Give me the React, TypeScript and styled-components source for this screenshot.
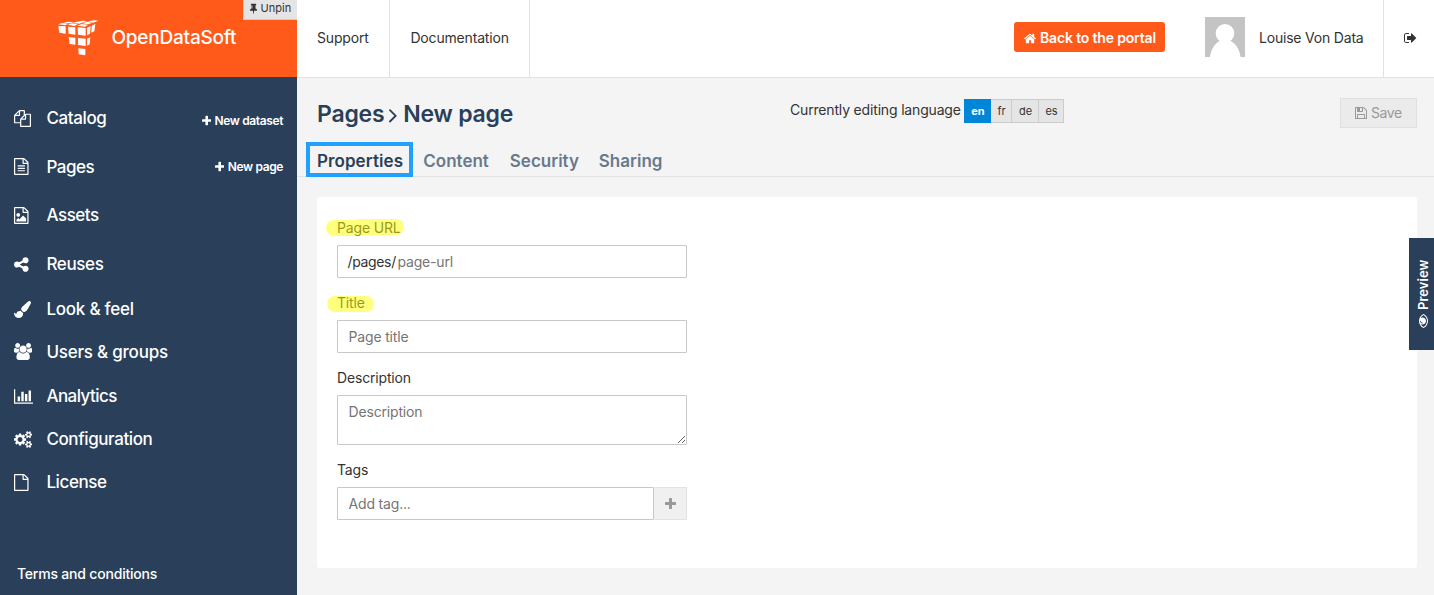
import React from 'react';
import styled, { createGlobalStyle } from 'styled-components';

const color = {
  orange: '#ff5a19',
  navy: '#2a3f5a',
  text: '#333',
  line: '#e3e3e3',
  page: '#f4f4f4',
  field: '#c8c8c8',
  placeholder: '#757575',
};

const GlobalStyle = createGlobalStyle`
  *, *::before, *::after { box-sizing: border-box; }
  body {
    margin: 0;
    overflow: hidden;
    background: ${color.page};
    color: ${color.text};
    font: 400 14px/22px Inter, "Liberation Sans", sans-serif;
    letter-spacing: -0.17px;
  }
  button, input, textarea { font: inherit; letter-spacing: inherit; color: inherit; }
`;

/* ---------- icons ---------- */

const PAGE =
  'M1596 380q28 28 48 76t20 88v1152q0 40-28 68t-68 28h-1344q-40 0-68-28t-28-68v-1600q0-40 28-68t68-28h896q40 0 88 20t76 48zm-444-244v376h376q-10-29-22-41l-313-313q-12-12-41-22zm384 1528v-1024h-416q-40 0-68-28t-28-68v-416h-768v1536h1280z';

const ICONS = {
  files: { x: 0, w: 1792, d: 'M1696 384q40 0 68 28t28 68v1216q0 40-28 68t-68 28h-960q-40 0-68-28t-28-68v-288h-544q-40 0-68-28t-28-68v-672q0-40 20-88t48-76l408-408q28-28 76-48t88-20h416q40 0 68 28t28 68v328q68-40 128-40h416zm-544 213l-299 299h299v-299zm-640-384l-299 299h299v-299zm196 647l316-316v-416h-384v416q0 40-28 68t-68 28h-416v640h512v-256q0-40 20-88t48-76zm956 804v-1152h-384v416q0 40-28 68t-68 28h-416v640h896z' },
  fileText: { x: 128, w: 1536, d: PAGE + 'M512 800q0-14 9-23t23-9h704q14 0 23 9t9 23v64q0 14-9 23t-23 9h-704q-14 0-23-9t-9-23v-64zm736 224q14 0 23 9t9 23v64q0 14-9 23t-23 9h-704q-14 0-23-9t-9-23v-64q0-14 9-23t23-9h704zm0 256q14 0 23 9t9 23v64q0 14-9 23t-23 9h-704q-14 0-23-9t-9-23v-64q0-14 9-23t23-9h704z' },
  fileImage: { x: 128, w: 1536, d: PAGE + 'M1408 1216v320h-1024v-192l192-192 128 128 384-384zm-832-192q-80 0-136-56t-56-136 56-136 136-56 136 56 56 136-56 136-136 56z' },
  file: { x: 128, w: 1536, d: PAGE },
  share: { x: 128, w: 1536, d: 'M1344 1024q133 0 226.5 93.5t93.5 226.5-93.5 226.5-226.5 93.5-226.5-93.5-93.5-226.5q0-12 2-34l-360-180q-92 86-218 86-133 0-226.5-93.5t-93.5-226.5 93.5-226.5 226.5-93.5q126 0 218 86l360-180q-2-22-2-34 0-133 93.5-226.5t226.5-93.5 226.5 93.5 93.5 226.5-93.5 226.5-226.5 93.5q-126 0-218-86l-360 180q2 22 2 34t-2 34l360 180q92-86 218-86z' },
  brush: { x: 0, w: 1792, d: 'M1615 0q70 0 122.5 46.5t52.5 116.5q0 63-45 151-332 629-465 752-97 91-218 91-126 0-216.5-92.5t-90.5-219.5q0-128 92-212l638-579q59-54 130-54zm-909 1034q39 76 106.5 130t150.5 76l1 71q4 213-129.5 347t-348.5 134q-123 0-218-46.5t-152.5-127.5-86.5-183-29-220q7 5 41 30t62 44.5 59 36.5 46 17q41 0 55-37 25-66 57.5-112.5t69.5-76 88-47.5 103-25.5 125-10.5z' },
  users: { x: 0, w: 1920, d: 'M593 896q-162 5-265 128h-134q-82 0-138-40.5t-56-118.5q0-353 124-353 6 0 43.5 21t97.5 42.5 119 21.5q67 0 133-23-5 37-5 66 0 139 81 256zm1071 637q0 120-73 189.5t-194 69.5h-874q-121 0-194-69.5t-73-189.5q0-53 3.5-103.5t14-109 26.5-108.5 43-97.5 62-81 85.5-53.5 111.5-20q10 0 43 21.5t73 48 107 48 135 21.5 135-21.5 107-48 73-48 43-21.5q61 0 111.5 20t85.5 53.5 62 81 43 97.5 26.5 108.5 14 109 3.5 103.5zm-1024-1277q0 106-75 181t-181 75-181-75-75-181 75-181 181-75 181 75 75 181zm704 384q0 159-112.5 271.5t-271.5 112.5-271.5-112.5-112.5-271.5 112.5-271.5 271.5-112.5 271.5 112.5 112.5 271.5zm576 225q0 78-56 118.5t-138 40.5h-134q-103-123-265-128 81-117 81-256 0-29-5-66 66 23 133 23 59 0 119-21.5t97.5-42.5 43.5-21q124 0 124 353zm-128-609q0 106-75 181t-181 75-181-75-75-181 75-181 181-75 181 75 75 181z' },
  chart: { x: 0, w: 2048, d: 'M640 896v512h-256v-512h256zm384-512v1024h-256v-1024h256zm1024 1152v128h-2048v-1536h128v1408h1920zm-640-896v768h-256v-768h256zm384-384v1152h-256v-1152h256z' },
  cogs: { x: 0, w: 1920, d: 'M896 896q0-106-75-181t-181-75-181 75-75 181 75 181 181 75 181-75 75-181zm768 512q0-52-38-90t-90-38-90 38-38 90q0 53 37.5 90.5t90.5 37.5 90.5-37.5 37.5-90.5zm0-1024q0-52-38-90t-90-38-90 38-38 90q0 53 37.5 90.5t90.5 37.5 90.5-37.5 37.5-90.5zm-384 421v185q0 10-7 19.5t-16 10.5l-155 24q-11 35-32 76 34 48 90 115 7 11 7 20 0 12-7 19-23 30-82.5 89.5t-78.5 59.5q-11 0-21-7l-115-90q-37 19-77 31-11 108-23 155-7 24-30 24h-186q-11 0-20-7.5t-10-17.5l-23-153q-34-10-75-31l-118 89q-7 7-20 7-11 0-21-8-144-133-144-160 0-9 7-19 10-14 41-53t47-61q-23-44-35-82l-152-24q-10-1-17-9.5t-7-19.5v-185q0-10 7-19.5t16-10.5l155-24q11-35 32-76-34-48-90-115-7-11-7-20 0-12 7-20 22-30 82-89t79-59q11 0 21 7l115 90q34-18 77-32 11-108 23-154 7-24 30-24h186q11 0 20 7.5t10 17.5l23 153q34 10 75 31l118-89q8-7 20-7 11 0 21 8 144 133 144 160 0 8-7 19-12 16-42 54t-45 60q23 48 34 82l152 23q10 2 17 10.5t7 19.5zm640 533v140q0 16-149 31-12 27-30 52 51 113 51 138 0 4-4 7-122 71-124 71-8 0-46-47t-52-68q-20 2-30 2t-30-2q-14 21-52 68t-46 47q-2 0-124-71-4-3-4-7 0-25 51-138-18-25-30-52-149-15-149-31v-140q0-16 149-31 13-29 30-52-51-113-51-138 0-4 4-7 4-2 35-20t59-34 30-16q8 0 46 46.5t52 67.5q20-2 30-2t30 2q51-71 92-112l6-2q4 0 124 70 4 3 4 7 0 25-51 138 17 23 30 52 149 15 149 31zm0-1024v140q0 16-149 31-12 27-30 52 51 113 51 138 0 4-4 7-122 71-124 71-8 0-46-47t-52-68q-20 2-30 2t-30-2q-14 21-52 68t-46 47q-2 0-124-71-4-3-4-7 0-25 51-138-18-25-30-52-149-15-149-31v-140q0-16 149-31 13-29 30-52-51-113-51-138 0-4 4-7 4-2 35-20t59-34 30-16q8 0 46 46.5t52 67.5q20-2 30-2t30 2q51-71 92-112l6-2q4 0 124 70 4 3 4 7 0 25-51 138 17 23 30 52 149 15 149 31z' },
  plus: { x: 192, w: 1408, d: 'M1600 736v192q0 40-28 68t-68 28h-416v416q0 40-28 68t-68 28h-192q-40 0-68-28t-28-68v-416h-416q-40 0-68-28t-28-68v-192q0-40 28-68t68-28h416v-416q0-40 28-68t68-28h192q40 0 68 28t28 68v416h416q40 0 68 28t28 68z' },
  pin: { x: 320, w: 1152, d: 'M800 864v-448q0-14-9-23t-23-9-23 9-9 23v448q0 14 9 23t23 9 23-9 9-23zm672 352q0 26-19 45t-45 19h-429l-51 483q-2 12-10.5 20.5t-20.5 8.5h-1q-27 0-32-27l-76-485h-404q-26 0-45-19t-19-45q0-123 78.5-221.5t177.5-98.5v-512q-52 0-90-38t-38-90 38-90 90-38h640q52 0 90 38t38 90-38 90-90 38v512q99 0 177.5 98.5t78.5 221.5z' },
  home: { x: 64, w: 1664, d: 'M1472 992v480q0 26-19 45t-45 19h-384v-384h-256v384h-384q-26 0-45-19t-19-45v-480q0-1 .5-3t.5-3l575-474 575 474q1 2 1 6zm223-69l-62 74q-8 9-21 11h-3q-13 0-21-7l-692-577-692 577q-12 8-24 7-13-2-21-11l-62-74q-8-10-7-23.5t11-21.5l719-599q32-26 76-26t76 26l244 204v-195q0-14 9-23t23-9h192q14 0 23 9t9 23v408l219 182q10 8 11 21.5t-7 23.5z' },
  signOut: { x: 64, w: 1600, d: 'M704 1440q0 4 1 20t.5 26.5-3 23.5-10 19.5-20.5 6.5h-320q-119 0-203.5-84.5t-84.5-203.5v-704q0-119 84.5-203.5t203.5-84.5h320q13 0 22.5 9.5t9.5 22.5q0 4 1 20t.5 26.5-3 23.5-10 19.5-20.5 6.5h-320q-66 0-113 47t-47 113v704q0 66 47 113t113 47h312l11.5 1 11.5 3 8 5.5 7 9 2 13.5zm928-544q0 26-19 45l-544 544q-19 19-45 19t-45-19-19-45v-288h-448q-26 0-45-19t-19-45v-384q0-26 19-45t45-19h448v-288q0-26 19-45t45-19 45 19l544 544q19 19 19 45z' },
  save: { x: 128, w: 1536, d: 'M512 1536h768v-384h-768v384zm896 0h128v-896q0-14-10-38.5t-20-34.5l-281-281q-10-10-34-20t-39-10v416q0 40-28 68t-68 28h-576q-40 0-68-28t-28-68v-416h-128v1280h128v-416q0-40 28-68t68-28h832q40 0 68 28t28 68v416zm-384-928v-320q0-13-9.5-22.5t-22.5-9.5h-192q-13 0-22.5 9.5t-9.5 22.5v320q0 13 9.5 22.5t22.5 9.5h192q13 0 22.5-9.5t9.5-22.5zm640 32v928q0 40-28 68t-68 28h-1344q-40 0-68-28t-28-68v-1344q0-40 28-68t68-28h928q40 0 88 20t76 48l280 280q28 28 48 76t20 88z' },
  eye: { x: 0, w: 1792, d: 'M1664 960q-152-236-381-353 61 104 61 225 0 185-131.5 316.5t-316.5 131.5-316.5-131.5-131.5-316.5q0-121 61-225-229 117-381 353 133 205 333.5 326.5t434.5 121.5 434.5-121.5 333.5-326.5zm-720-384q0-20-14-34t-34-14q-125 0-214.5 89.5t-89.5 214.5q0 20 14 34t34 14 34-14 14-34q0-86 61-147t147-61q20 0 34-14t14-34zm848 384q0 34-20 69-140 230-376.5 368.5t-499.5 138.5-499.5-139-376.5-368q-20-35-20-69t20-69q140-229 376.5-368t499.5-139 499.5 139 376.5 368q20 35 20 69z' },
  angle: { x: 595, w: 590, d: 'M1171 960q0 13-10 23l-466 466q-10 10-23 10t-23-10l-50-50q-10-10-10-23t10-23l393-393-393-393q-10-10-10-23t10-23l50-50q10-10 23-10t23 10l466 466q10 10 10 23z' },
};

type IconName = keyof typeof ICONS;

const Glyph = styled.svg`
  display: block;
  flex: none;
  fill: currentColor;
`;

const Icon = ({ name, size }: { name: IconName; size: number }) => {
  const { x, w, d } = ICONS[name];
  return (
    <Glyph width={(size * w) / 1792} height={size} viewBox={`${x} 0 ${w} 1792`} aria-hidden>
      <path d={d} />
    </Glyph>
  );
};

/* ---------- sidebar ---------- */

const Shell = styled.div`
  display: grid;
  grid-template-columns: 297px 1fr;
  height: 595px;
  position: relative;
`;

const Sidebar = styled.aside`
  display: flex;
  flex-direction: column;
  background: ${color.navy};
  color: #fff;
`;

const Brand = styled.div`
  position: relative;
  display: flex;
  align-items: center;
  height: 77px;
  padding: 0 0 2px 57px;
  background: ${color.orange};
`;

const BrandMark = styled.svg`
  display: block;
  fill: #fff;
`;

const BrandName = styled.span`
  margin-left: 12.5px;
  font-size: 19px;
  font-weight: 500;
  letter-spacing: -0.22px;
`;

const Unpin = styled.button`
  position: absolute;
  top: 0;
  right: 0;
  display: flex;
  align-items: center;
  gap: 3.5px;
  width: 54px;
  height: 20px;
  padding: 0 0 3px 6px;
  border: solid #ccc;
  border-width: 0 0 1px 1px;
  background: #e5e5e5;
  color: ${color.text};
  font-size: 11px;
  letter-spacing: 0;
`;

const Menu = styled.nav`
  display: flex;
  flex-direction: column;
  flex: 1;
  padding-top: 17px;
`;

const MenuRow = styled.div<{ $height: number }>`
  display: flex;
  align-items: center;
  height: ${(p) => p.$height}px;
  padding: 0 14px;
`;

const MenuIcon = styled.span`
  width: 32.4px;
`;

const MenuLabel = styled.span<{ $track: number }>`
  flex: 1;
  font-size: 17px;
  font-weight: 500;
  letter-spacing: ${(p) => p.$track}px;
`;

const MenuAction = styled.a<{ $drop: number }>`
  display: flex;
  align-items: center;
  gap: 3.5px;
  padding-top: ${(p) => p.$drop}px;
  font-size: 12px;
  font-weight: 600;
  letter-spacing: -0.38px;
`;

const Terms = styled.a`
  padding: 0 17px 10px;
  font-weight: 500;
  letter-spacing: -0.2px;
`;

type MenuItem = { icon: IconName; label: string; height: number; track: number; action?: string; drop?: number };

const MENU: MenuItem[] = [
  { icon: 'files', label: 'Catalog', height: 48, track: -0.38, action: 'New dataset', drop: 5 },
  { icon: 'fileText', label: 'Pages', height: 49, track: -0.45, action: 'New page', drop: 0 },
  { icon: 'fileImage', label: 'Assets', height: 48, track: -0.45 },
  { icon: 'share', label: 'Reuses', height: 50, track: -0.38 },
  { icon: 'brush', label: 'Look & feel', height: 40, track: -0.24 },
  { icon: 'users', label: 'Users & groups', height: 45, track: -0.22 },
  { icon: 'chart', label: 'Analytics', height: 44, track: -0.54 },
  { icon: 'cogs', label: 'Configuration', height: 42, track: -0.4 },
  { icon: 'file', label: 'License', height: 44, track: -0.4 },
];

/* ---------- top bar ---------- */

const Main = styled.div`
  display: flex;
  flex-direction: column;
  min-width: 0;
`;

const TopBar = styled.header`
  display: flex;
  align-items: stretch;
  height: 78px;
  border-bottom: 1px solid ${color.line};
  background: #fff;
`;

const TopLink = styled.a<{ $width: number; $inset: number }>`
  display: flex;
  align-items: center;
  width: ${(p) => p.$width}px;
  padding: 0 0 1px ${(p) => p.$inset}px;
  border-right: 1px solid ${color.line};
`;

const TopRight = styled.div`
  display: flex;
  align-items: center;
  margin-left: auto;
`;

const PortalButton = styled.button`
  display: flex;
  align-items: center;
  gap: 4px;
  width: 151px;
  height: 30px;
  margin: 0 40px 3px 0;
  padding: 2px 0 0 10px;
  border: 0;
  border-radius: 3px;
  background: ${color.orange};
  color: #fff;
  font-weight: 600;
  white-space: nowrap;
`;

const Avatar = styled.svg`
  display: block;
  margin: 0 14px 3px 0;
`;

const UserName = styled.span`
  width: 124px;
  padding-bottom: 1px;
  letter-spacing: -0.2px;
`;

const Logout = styled.a`
  display: flex;
  align-items: center;
  align-self: stretch;
  width: 51px;
  padding: 0 0 1px 20px;
  border-left: 1px solid ${color.line};
`;

/* ---------- page heading ---------- */

const Heading = styled.div`
  display: flex;
  align-items: flex-start;
  position: relative;
  height: 64px;
  padding: 0 17px 0 20px;
`;

const Title = styled.h1`
  display: flex;
  align-items: center;
  width: 473px;
  margin: 21px 0 0;
  color: ${color.navy};
  font-size: 23px;
  font-weight: 600;
  line-height: 30px;
  letter-spacing: -0.22px;
`;

const Crumb = styled.span`
  margin: 2px 6px 0 5px;
`;

const Languages = styled.div`
  display: flex;
  align-items: center;
  margin-top: 21px;
`;

const LanguageLabel = styled.span`
  width: 174px;
  margin-top: -2px;
  white-space: nowrap;
`;

const Language = styled.button<{ $width: number; $active?: boolean }>`
  width: ${(p) => p.$width}px;
  height: 24px;
  padding: 0 0 0 1px;
  border: 1px solid ${(p) => (p.$active ? '#0086d9' : '#ccc')};
  border-left-width: ${(p) => (p.$active ? 1 : 0)}px;
  background: ${(p) => (p.$active ? '#0086d9' : '#e5e5e5')};
  color: ${(p) => (p.$active ? '#fff' : color.text)};
  font-size: 11px;
  font-weight: ${(p) => (p.$active ? 700 : 400)};
  letter-spacing: 0;
`;

const SaveButton = styled.button`
  display: flex;
  align-items: center;
  gap: 4px;
  width: 77px;
  height: 30px;
  margin: 20px 0 0 auto;
  padding: 0 0 0 14px;
  border: 1px solid #e0e0e0;
  background: #ebebeb;
  color: #999;
  letter-spacing: -0.4px;
`;

const Tabs = styled.nav`
  display: flex;
  gap: 20px;
  height: 35px;
  padding: 0 20px;
  border-bottom: 1px solid ${color.line};
`;

const Tab = styled.a<{ $active?: boolean; $width: number }>`
  position: relative;
  width: ${(p) => p.$width}px;
  color: ${(p) => (p.$active ? color.navy : '#69798c')};
  font-size: 17px;
  font-weight: 600;
  line-height: 39px;
  letter-spacing: ${(p) => (p.$active ? 0.08 : 0)}px;
  white-space: nowrap;
`;

const FocusBox = styled.span`
  position: absolute;
  top: 0;
  left: -11px;
  width: 107px;
  height: 35px;
  border: 4px solid #21a1ff;
`;

/* ---------- form ---------- */

const Card = styled.section`
  width: 1100px;
  height: 371px;
  margin: 20px 0 0 20px;
  padding: 20px;
  border-radius: 3px;
  background: #fff;
`;

const Field = styled.div`
  width: 350px;
  margin-bottom: 14px;
`;

const Label = styled.label`
  position: relative;
  display: block;
  width: max-content;
  margin-bottom: 6px;
`;

const Highlight = styled.span`
  position: absolute;
  inset: 0;
  opacity: 0.5;
`;

const Stroke = styled.span<{ $left: number; $top: number; $width: number; $height: number }>`
  position: absolute;
  left: ${(p) => p.$left}px;
  top: ${(p) => p.$top}px;
  width: ${(p) => p.$width}px;
  height: ${(p) => p.$height}px;
  border-radius: 8px;
  background: #ff0;
`;

const InputRow = styled.div`
  display: flex;
  height: 33px;
`;

const InputBox = styled.div`
  display: flex;
  align-items: center;
  flex: 1;
  border: 1px solid ${color.field};
  border-radius: 1px;
  padding-left: 9.5px;
`;

const Input = styled.input`
  flex: 1;
  min-width: 0;
  height: 31px;
  padding: 0 0 0 1px;
  border: 0;
  outline: 0;
  background: none;
  &::placeholder { color: ${color.placeholder}; opacity: 1; }
`;

const Prefix = styled.span`
  margin-right: 0.6px;
  letter-spacing: -0.35px;
`;

const TextArea = styled.textarea`
  display: block;
  width: 350px;
  height: 50px;
  padding: 5px 10.5px;
  border: 1px solid ${color.field};
  border-radius: 1px;
  outline: 0;
  resize: vertical;
  &::placeholder { color: ${color.placeholder}; opacity: 1; }
`;

const AddButton = styled.button`
  display: flex;
  align-items: center;
  justify-content: center;
  width: 33px;
  padding: 0;
  border: 1px solid #e3e3e3;
  border-left: 0;
  background: #f0f0f0;
  color: #999;
`;

const Preview = styled.button`
  position: absolute;
  top: 238px;
  right: 0;
  display: flex;
  align-items: center;
  gap: 4.5px;
  width: 25px;
  height: 112px;
  padding: 21.5px 3px 0 0;
  border: 0;
  background: ${color.navy};
  color: #fff;
  font-size: 13px;
  font-weight: 600;
  line-height: 22px;
  letter-spacing: 0.05px;
  writing-mode: vertical-rl;
  transform: rotate(180deg);
`;

const EyeTurn = styled.span`
  transform: rotate(90deg);
`;

export default function App() {
  return (
    <Shell>
      <GlobalStyle />
      <Sidebar>
        <Brand>
          <BrandMark width="42" height="36" viewBox="171 58 126 108">
            <path d="M174 71l14-4 17 2-10 5zM203 72l12-4 18 2-9 6zM232 75l12-5 20 2-9 6zM190 66l15-3 16 2-12 3zM218 66l14-3 18 2-12 4zM246 68l14-5 17 3-12 5zM262 62l22-3 11 1-15 6zM232 62l19-2 10 1-12 4z" />
            <path d="M175 76l22 1v22l-19-3zM204 78l22 2v22l-20-3zM233 80l24 2v23l-23-3zM261 81l11-5-2 23-9 5zM275 75l11-5-3 22-9 4z" />
            <path d="M206 109l20 2v21l-17-2zM234 112l23 2v22l-23-3zM261 114l10-4-2 21-8 4zM235 143l21 2v19l-20-3z" />
          </BrandMark>
          <BrandName>OpenDataSoft</BrandName>
          <Unpin>
            <Icon name="pin" size={11} />
            Unpin
          </Unpin>
        </Brand>
        <Menu>
          {MENU.map((item) => (
            <MenuRow key={item.label} $height={item.height}>
              <MenuIcon>
                <Icon name={item.icon} size={17} />
              </MenuIcon>
              <MenuLabel $track={item.track}>{item.label}</MenuLabel>
              {item.action && (
                <MenuAction $drop={item.drop ?? 0}>
                  <Icon name="plus" size={12} />
                  {item.action}
                </MenuAction>
              )}
            </MenuRow>
          ))}
        </Menu>
        <Terms>Terms and conditions</Terms>
      </Sidebar>

      <Main>
        <TopBar>
          <TopLink $width={93} $inset={20}>Support</TopLink>
          <TopLink $width={140} $inset={20.4}>Documentation</TopLink>
          <TopRight>
            <PortalButton>
              <Icon name="home" size={13} />
              Back to the portal
            </PortalButton>
            <Avatar width="40" height="40" viewBox="0 0 40 40">
              <rect width="40" height="40" fill="#c4c4c4" />
              <circle cx="20" cy="16.3" r="9.3" fill="#fff" />
              <path d="M5 40c1-8 5-13.5 9.5-16h11C30.5 26.5 34.5 32 35.5 40z" fill="#fff" />
            </Avatar>
            <UserName>Louise Von Data</UserName>
            <Logout>
              <Icon name="signOut" size={14} />
            </Logout>
          </TopRight>
        </TopBar>

        <Heading>
          <Title>
            Pages
            <Crumb>
              <Icon name="angle" size={24} />
            </Crumb>
            New page
          </Title>
          <Languages>
            <LanguageLabel>Currently editing language</LanguageLabel>
            <Language $width={27} $active>en</Language>
            <Language $width={21}>fr</Language>
            <Language $width={27}>de</Language>
            <Language $width={25}>es</Language>
          </Languages>
          <SaveButton>
            <Icon name="save" size={14} />
            Save
          </SaveButton>
        </Heading>

        <Tabs>
          <Tab $active $width={86.3}>
            Properties
            <FocusBox />
          </Tab>
          <Tab $width={66.5}>Content</Tab>
          <Tab $width={69}>Security</Tab>
          <Tab $width={64}>Sharing</Tab>
        </Tabs>

        <Card>
          <Field>
            <Label>
              Page URL
              <Highlight>
                <Stroke $left={-11} $top={3} $width={40} $height={16} />
                <Stroke $left={14} $top={2} $width={53} $height={16} />
              </Highlight>
            </Label>
            <InputRow>
              <InputBox>
                <Prefix>/pages/</Prefix>
                <Input placeholder="page-url" />
              </InputBox>
            </InputRow>
          </Field>
          <Field>
            <Label>
              Title
              <Highlight>
                <Stroke $left={-10} $top={4} $width={47} $height={16} />
              </Highlight>
            </Label>
            <InputRow>
              <InputBox>
                <Input placeholder="Page title" />
              </InputBox>
            </InputRow>
          </Field>
          <Field>
            <Label>Description</Label>
            <TextArea placeholder="Description" />
          </Field>
          <Field>
            <Label>Tags</Label>
            <InputRow>
              <InputBox>
                <Input placeholder="Add tag..." />
              </InputBox>
              <AddButton>
                <Icon name="plus" size={14} />
              </AddButton>
            </InputRow>
          </Field>
        </Card>
      </Main>

      <Preview>
        <EyeTurn>
          <Icon name="eye" size={14} />
        </EyeTurn>
        Preview
      </Preview>
    </Shell>
  );
}
